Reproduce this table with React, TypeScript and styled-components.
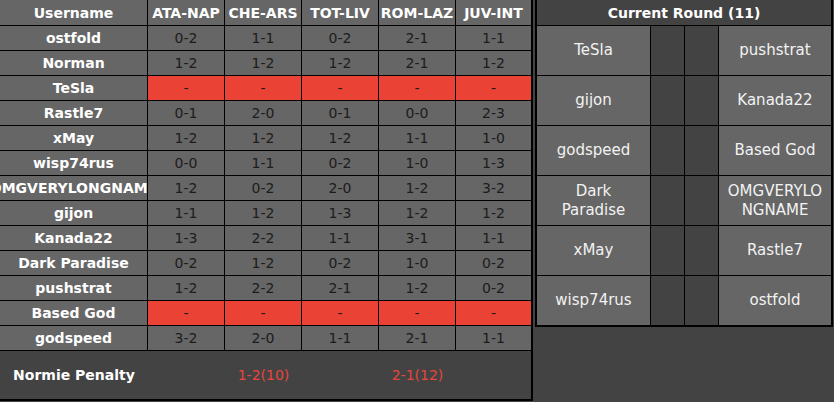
import styled, { createGlobalStyle } from 'styled-components';

const GlobalStyle = createGlobalStyle`
  body {
    margin: 0;
    background: #434343;
    font-family: "DejaVu Sans", "Liberation Sans", sans-serif;
  }
`

const Page = styled.div`
  display: flex;
  align-items: flex-start;
  gap: 1px;
  width: 834px;
  height: 402px;
  overflow: hidden;
  background: #434343;
`

const Standings = styled.div`
  width: 531px;
  border-right: 2px solid #000;
  border-bottom: 2px solid #000;
`

const Grid = styled.div`
  display: grid;
  grid-template-columns: 147px 76px 76px 76px 76px 75px;
  grid-auto-rows: 24px;
  grid-template-rows: 25px;
  gap: 1px;
  background: #000;
  border-bottom: 1px solid #000;
`

const Cell = styled.div<{ $red?: boolean; $head?: boolean; $name?: boolean }>`
  display: flex;
  align-items: center;
  justify-content: center;
  overflow: hidden;
  white-space: nowrap;
  background: ${p => (p.$red ? '#ea4335' : '#666666')};
  color: ${p => (p.$head || p.$name ? '#ffffff' : '#1c1c1c')};
  font-weight: ${p => (p.$head || p.$name ? 700 : 400)};
  font-size: 14px;
`

const Footer = styled.div`
  display: grid;
  grid-template-columns: 148px 77px 77px 77px 77px 75px;
  height: 48px;
  background: #434343;
`

const FooterCell = styled.div<{ $label?: boolean }>`
  display: flex;
  align-items: center;
  justify-content: center;
  white-space: nowrap;
  color: ${p => (p.$label ? '#ffffff' : '#e8453c')};
  font-weight: ${p => (p.$label ? 700 : 400)};
  font-size: 14px;
`

const Round = styled.div`
  width: 294px;
  margin-left: 1px;
  border: 2px solid #000;
  border-top: 0;
`

const RoundHead = styled.div`
  height: 25px;
  display: flex;
  align-items: center;
  justify-content: center;
  color: #ffffff;
  font-weight: 700;
  font-size: 14px;
  background: #434343;
  border-bottom: 1px solid #000;
`

const Pairs = styled.div`
  display: grid;
  grid-template-columns: 113px 33px 33px 112px;
  grid-auto-rows: 49px;
  gap: 1px;
  background: #000;
`

const Player = styled.div`
  display: flex;
  align-items: center;
  justify-content: center;
  text-align: center;
  padding: 0 6px;
  background: #666666;
  color: #f2f2f2;
  font-size: 15px;
  line-height: 19px;
  overflow-wrap: anywhere;
`

const Empty = styled.div`
  background: #434343;
`

const games = ['ATA-NAP', 'CHE-ARS', 'TOT-LIV', 'ROM-LAZ', 'JUV-INT']

const rows: [string, string[] | null][] = [
  ['ostfold', ['0-2', '1-1', '0-2', '2-1', '1-1']],
  ['Norman', ['1-2', '1-2', '1-2', '2-1', '1-2']],
  ['TeSla', null],
  ['Rastle7', ['0-1', '2-0', '0-1', '0-0', '2-3']],
  ['xMay', ['1-2', '1-2', '1-2', '1-1', '1-0']],
  ['wisp74rus', ['0-0', '1-1', '0-2', '1-0', '1-3']],
  ['OMGVERYLONGNAME', ['1-2', '0-2', '2-0', '1-2', '3-2']],
  ['gijon', ['1-1', '1-2', '1-3', '1-2', '1-2']],
  ['Kanada22', ['1-3', '2-2', '1-1', '3-1', '1-1']],
  ['Dark Paradise', ['0-2', '1-2', '0-2', '1-0', '0-2']],
  ['pushstrat', ['1-2', '2-2', '2-1', '1-2', '0-2']],
  ['Based God', null],
  ['godspeed', ['3-2', '2-0', '1-1', '2-1', '1-1']],
]

const pairs = [
  ['TeSla', 'pushstrat'],
  ['gijon', 'Kanada22'],
  ['godspeed', 'Based God'],
  ['Dark Paradise', 'OMGVERYLONGNAME'],
  ['xMay', 'Rastle7'],
  ['wisp74rus', 'ostfold'],
]

export default function App() {
  return (
    <Page>
      <GlobalStyle />
      <Standings>
        <Grid>
          <Cell $head>Username</Cell>
          {games.map(g => <Cell key={g} $head>{g}</Cell>)}
          {rows.map(([name, scores]) => (
            <>
              <Cell key={name} $name>{name}</Cell>
              {scores
                ? scores.map((s, i) => <Cell key={name + i}>{s}</Cell>)
                : games.map(g => <Cell key={name + g} $red>-</Cell>)}
            </>
          ))}
        </Grid>
        <Footer>
          <FooterCell $label>Normie Penalty</FooterCell>
          <FooterCell />
          <FooterCell>1-2(10)</FooterCell>
          <FooterCell />
          <FooterCell>2-1(12)</FooterCell>
          <FooterCell />
        </Footer>
      </Standings>
      <Round>
        <RoundHead>Current Round (11)</RoundHead>
        <Pairs>
          {pairs.map(([a, b]) => (
            <>
              <Player key={a}>{a}</Player>
              <Empty />
              <Empty />
              <Player key={b}>{b}</Player>
            </>
          ))}
        </Pairs>
      </Round>
    </Page>
  );
}
